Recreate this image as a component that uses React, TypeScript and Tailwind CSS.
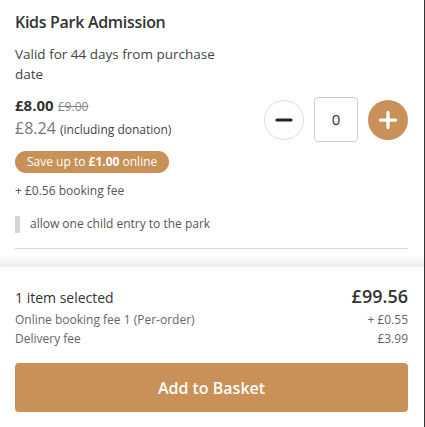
import { Minus, Plus } from 'lucide-react';

export default function App() {
  return (
    <div
      className="w-[425px] h-[427px] bg-white border-r border-[#333] flex flex-col text-[#333]"
      style={{ fontFamily: '"Open Sans", "Liberation Sans", sans-serif' }}
    >
      {/* ticket */}
      <div className="px-[15px] pr-[16px] pt-[10px]">
        <h2 className="text-[16px] leading-[24px] font-semibold tracking-[-0.3px]">Kids Park Admission</h2>
        <div className="flex items-start justify-between">
          <div>
            <p className="mt-[10px] w-[220px] text-[13.5px] leading-[20px] text-[#444]">
              Valid for 44 days from purchase date
            </p>
            <div className="mt-[10px] leading-[22px]">
              <span className="text-[15px] font-bold">£8.00</span>{' '}
              <span className="text-[12px] text-[#888] line-through">£9.00</span>
            </div>
            <div className="leading-[21px] text-[#777]">
              <span className="text-[16px]">£8.24</span>{' '}
              <span className="text-[12px] text-[#444]">(including donation)</span>
            </div>
          </div>
          <div className="mt-[63px] flex items-center gap-[10px]">
            <button className="w-[40px] h-[40px] rounded-full border border-[#ddd] flex items-center justify-center">
              <Minus size={24} strokeWidth={3.2} color="#222" />
            </button>
            <div className="w-[44px] h-[45px] rounded-[4px] border border-[#ccc] flex items-center justify-center text-[15px]">
              0
            </div>
            <button className="w-[40px] h-[40px] rounded-full bg-[#c99157] flex items-center justify-center">
              <Plus size={26} strokeWidth={3} color="white" />
            </button>
          </div>
        </div>
        <div className="mt-[9px] inline-flex items-center h-[22px] px-[12px] rounded-full bg-[#c99157] text-white text-[12px]">
          Save up to&nbsp;<b className="font-bold">£1.00</b>&nbsp;online
        </div>
        <p className="mt-[9px] text-[12px] leading-[18px] text-[#555]">+ £0.56 booking fee</p>
        <div className="mt-[15px] flex items-center gap-[10px]">
          <div className="w-[5px] h-[17px] bg-[#d5d5d5]" />
          <span className="text-[12px] text-[#555]">allow one child entry to the park</span>
        </div>
        <hr className="mt-[15px] border-0 h-px bg-[#d6d6d6]" />
      </div>

      <div className="flex-1" />

      {/* summary */}
      <div className="h-[12px] bg-gradient-to-b from-white to-[#ececec]" />
      <div className="px-[15px] pr-[16px] pt-[16px] pb-[15px]">
        <div className="flex items-baseline justify-between">
          <span className="text-[14px]">1 item selected</span>
          <span className="text-[18px] font-semibold">£99.56</span>
        </div>
        <div className="flex justify-between text-[12px] leading-[19px] text-[#666]">
          <span>Online booking fee 1 (Per-order)</span>
          <span>+ £0.55</span>
        </div>
        <div className="flex justify-between text-[12px] leading-[19px] text-[#666]">
          <span>Delivery fee</span>
          <span>£3.99</span>
        </div>
        <button className="mt-[15px] w-full h-[49px] rounded-[4px] bg-[#c99157] text-white text-[16px] font-semibold">
          Add to Basket
        </button>
      </div>
    </div>
  );
}
